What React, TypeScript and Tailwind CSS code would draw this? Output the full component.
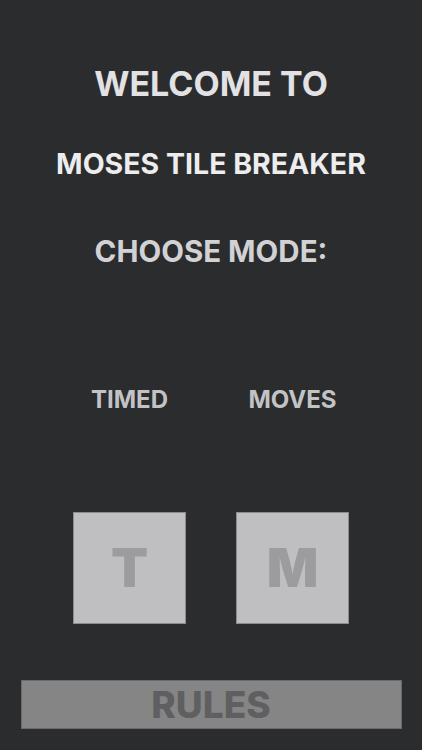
import React from "react";

const modes = [
  { label: "TIMED", letter: "T" },
  { label: "MOVES", letter: "M" },
];

export default function App() {
  return (
    <div
      className="w-full h-[750px] bg-[#2b2c2e] flex flex-col items-center overflow-hidden"
      style={{ fontFamily: "Inter, 'Noto Sans', sans-serif" }}
    >
      <h1 className="mt-[62px] text-[34px] leading-[44px] font-bold text-[#e2e2e4]">WELCOME TO</h1>
      <h2 className="mt-[40px] text-[28.5px] leading-[36px] font-bold text-[#ededee]">MOSES TILE BREAKER</h2>
      <h3 className="mt-[51px] text-[29.5px] leading-[36px] font-bold text-[#d2d2d4]">CHOOSE MODE:</h3>

      {/* mode picker: label above each tile */}
      <div className="mt-[117px] flex gap-[50px]">
        {modes.map((m) => (
          <div key={m.letter} className="flex flex-col items-center">
            <span className="text-[24px] leading-[28px] font-bold text-[#c3c3c5]">{m.label}</span>
            <button className="mt-[98px] w-[113px] h-[112px] bg-[#bfbfc1] border border-[#8c8c8e] flex items-center justify-center">
              <span className="text-[54px] leading-none font-black text-[#9c9c9e]">{m.letter}</span>
            </button>
          </div>
        ))}
      </div>

      <button className="mt-[56px] w-[381px] h-[49px] bg-[#858586] border border-[#6a6a6c] flex items-center justify-center">
        <span className="text-[37px] leading-none font-extrabold text-[#5f5f61]">RULES</span>
      </button>
    </div>
  );
}
